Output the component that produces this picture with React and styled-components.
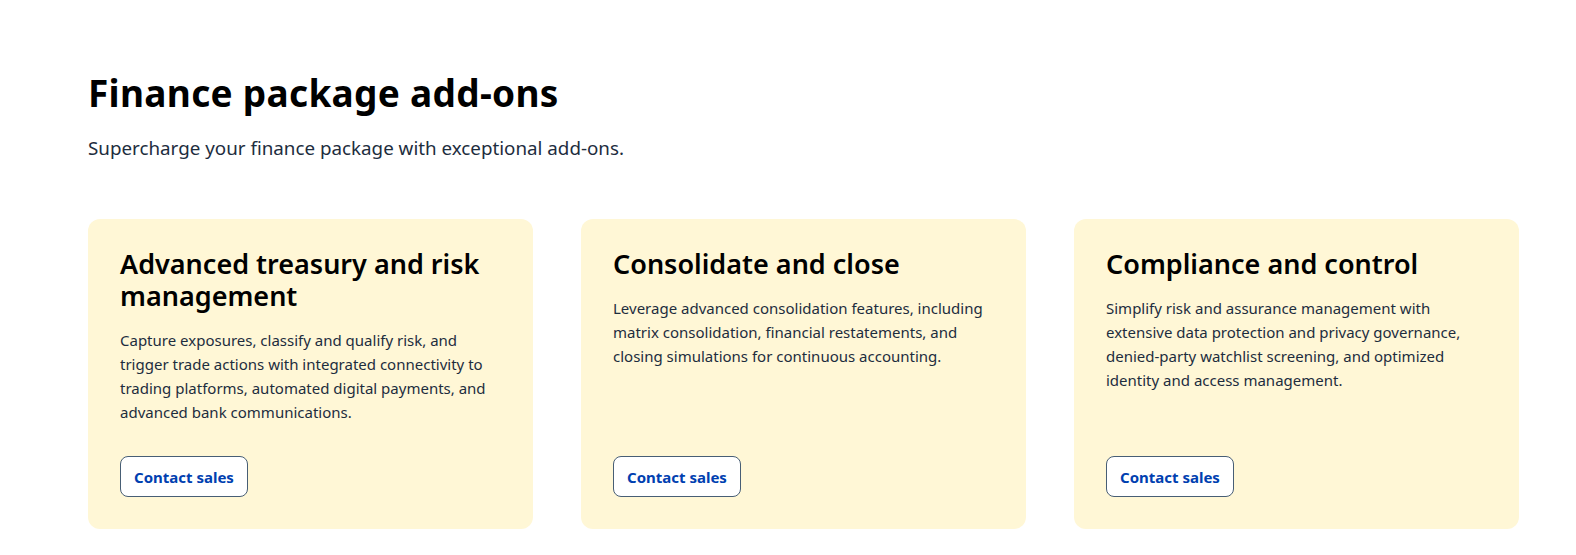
import styled, { createGlobalStyle } from "styled-components";

const GlobalStyle = createGlobalStyle`
  body {
    margin: 0;
    background: #ffffff;
    font-family: "Noto Sans", "Liberation Sans", sans-serif;
  }
`;

const Section = styled.section`
  padding: 71px 57px 26px 88px;
`;

const Title = styled.h1`
  margin: 0;
  font-size: 37px;
  line-height: 44px;
  font-weight: 700;
  letter-spacing: 0.3px;
  color: #000000;
`;

const Subtitle = styled.p`
  margin: 20px 0 0;
  font-size: 18.8px;
  line-height: 26px;
  color: #1d2d3e;
`;

const Grid = styled.div`
  display: grid;
  grid-template-columns: repeat(3, 445px);
  gap: 48px;
  margin-top: 58px;
`;

const Card = styled.div`
  display: flex;
  flex-direction: column;
  align-items: flex-start;
  background: #fff7d6;
  border-radius: 12px;
  padding: 29px 32px 32px;
`;

const CardTitle = styled.h2`
  margin: 0;
  font-size: 27px;
  line-height: 32px;
  font-weight: 600;
  color: #000000;
`;

const CardText = styled.p`
  margin: 16px 0 32px;
  font-size: 15px;
  line-height: 24px;
  color: #1d2d3e;
`;

const Button = styled.a`
  margin-top: auto;
  display: inline-flex;
  align-items: center;
  height: 41px;
  padding: 0 13px;
  box-sizing: border-box;
  background: #ffffff;
  border: 1px solid #475e75;
  border-radius: 8px;
  color: #0040b0;
  font-size: 15px;
  font-weight: 700;
  text-decoration: none;
  cursor: pointer;
`;

const addons = [
  {
    title: "Advanced treasury and risk management",
    text: "Capture exposures, classify and qualify risk, and trigger trade actions with integrated connectivity to trading platforms, automated digital payments, and advanced bank communications.",
  },
  {
    title: "Consolidate and close",
    text: "Leverage advanced consolidation features, including matrix consolidation, financial restatements, and closing simulations for continuous accounting.",
  },
  {
    title: "Compliance and control",
    text: "Simplify risk and assurance management with extensive data protection and privacy governance, denied-party watchlist screening, and optimized identity and access management.",
  },
];

const App = () => {
  return (
    <>
      <GlobalStyle />
      <Section>
        <Title>Finance package add-ons</Title>
        <Subtitle>Supercharge your finance package with exceptional add-ons.</Subtitle>
        <Grid>
          {addons.map((item) => (
            <Card key={item.title}>
              <CardTitle>{item.title}</CardTitle>
              <CardText>{item.text}</CardText>
              <Button>Contact sales</Button>
            </Card>
          ))}
        </Grid>
      </Section>
    </>
  );
};

export default App;
